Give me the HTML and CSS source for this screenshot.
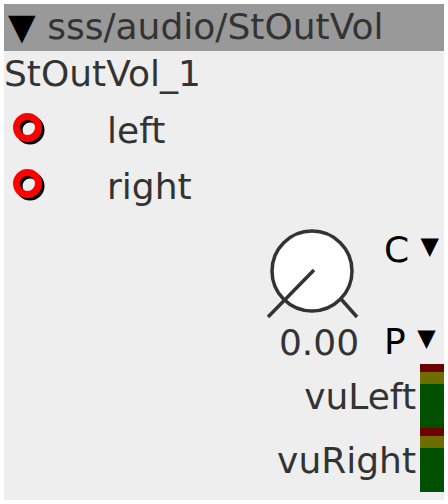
FILE: index.html
```html
<!DOCTYPE html>
<html lang="en">
  <head>
    <meta charset="UTF-8" />
    <meta name="viewport" content="width=device-width, initial-scale=1.0" />
    <title>StOutVol</title>
    <link rel="stylesheet" href="styles.css">
  </head>
  <body>
    <div class="object">
      <div class="header"><span class="arrow">▼</span> sss/audio/StOutVol</div>
      <div class="title">StOutVol_1</div>

      <!-- inlets -->
      <div class="inlet">
        <svg class="jack" width="38" height="38" viewBox="0 0 38 38">
          <circle cx="18" cy="18" r="11" fill="none" stroke="#000" stroke-width="7" />
          <circle cx="15.5" cy="15.5" r="11" fill="none" stroke="#ff0000" stroke-width="7" />
        </svg>
        <span class="inlet-name">left</span>
      </div>
      <div class="inlet">
        <svg class="jack" width="38" height="38" viewBox="0 0 38 38">
          <circle cx="18" cy="18" r="11" fill="none" stroke="#000" stroke-width="7" />
          <circle cx="15.5" cy="15.5" r="11" fill="none" stroke="#ff0000" stroke-width="7" />
        </svg>
        <span class="inlet-name">right</span>
      </div>

      <!-- volume knob -->
      <div class="knob-row">
        <div class="knob">
          <svg width="96" height="96" viewBox="0 0 96 96">
            <circle cx="48" cy="45" r="40" fill="#fff" stroke="#333" stroke-width="3.5" />
            <line x1="50" y1="44" x2="4" y2="91" stroke="#333" stroke-width="3.5" />
            <line x1="77" y1="73" x2="93" y2="91" stroke="#333" stroke-width="3.5" />
          </svg>
          <div class="value">0.00</div>
        </div>
        <div class="modes">
          <div class="mode">C <span class="small-arrow">▼</span></div>
          <div class="mode">P <span class="small-arrow">▼</span></div>
        </div>
      </div>

      <!-- meters -->
      <div class="vu-row">
        <span class="vu-label">vuLeft</span>
        <div class="vu-bar">
          <div class="vu-red"></div>
          <div class="vu-yellow"></div>
          <div class="vu-green"></div>
        </div>
      </div>
      <div class="vu-row">
        <span class="vu-label">vuRight</span>
        <div class="vu-bar">
          <div class="vu-red"></div>
          <div class="vu-yellow"></div>
          <div class="vu-green"></div>
        </div>
      </div>
    </div>
  </body>
</html>
```

FILE: styles.css
```css
body {
  margin: 0;
  padding: 4px;
  background-color: #ffffff;
  font-family: "DejaVu Sans", sans-serif;
  font-size: 36px;
  color: #333;
}

.object {
  width: 440px;
  height: 496px;
  background-color: #eeeeee;
  overflow: hidden;
}

.header {
  height: 47px;
  line-height: 46px;
  padding-left: 4px;
  background-color: #999999;
  white-space: nowrap;
}

.arrow {
  color: #000;
}

.title {
  height: 45px;
  line-height: 45px;
  padding-bottom: 7px;
  white-space: nowrap;
}

.inlet {
  display: flex;
  align-items: center;
  height: 56px;
  padding-left: 8px;
}

.jack {
  display: block;
}

.inlet-name {
  margin-left: 57px;
  line-height: 56px;
}

.knob-row {
  display: flex;
  justify-content: flex-end;
  height: 149px;
}

.knob {
  display: flex;
  flex-direction: column;
  align-items: center;
  width: 96px;
  margin-right: 24px;
}

.knob svg {
  display: block;
  margin-top: 11px;
}

.value {
  line-height: 42px;
  margin-left: 14px;
  white-space: nowrap;
}

.modes {
  display: flex;
  flex-direction: column;
  justify-content: space-between;
  width: 60px;
  padding-top: 10px;
  padding-bottom: 1px;
  color: #000;
}

.mode {
  line-height: 42px;
  white-space: nowrap;
}

.small-arrow {
  font-size: 24px;
  vertical-align: 8px;
}

.vu-row {
  display: flex;
  justify-content: flex-end;
  align-items: flex-end;
  height: 64px;
}

.vu-label {
  line-height: 42px;
  padding-right: 4px;
  padding-bottom: 10px;
  white-space: nowrap;
}

.vu-bar {
  display: flex;
  flex-direction: column;
  width: 24px;
  height: 64px;
}

.vu-red {
  height: 8px;
  background-color: #6e0000;
}

.vu-yellow {
  height: 12px;
  background-color: #6e6e00;
}

.vu-green {
  flex: 1;
  background-color: #005000;
}
```
